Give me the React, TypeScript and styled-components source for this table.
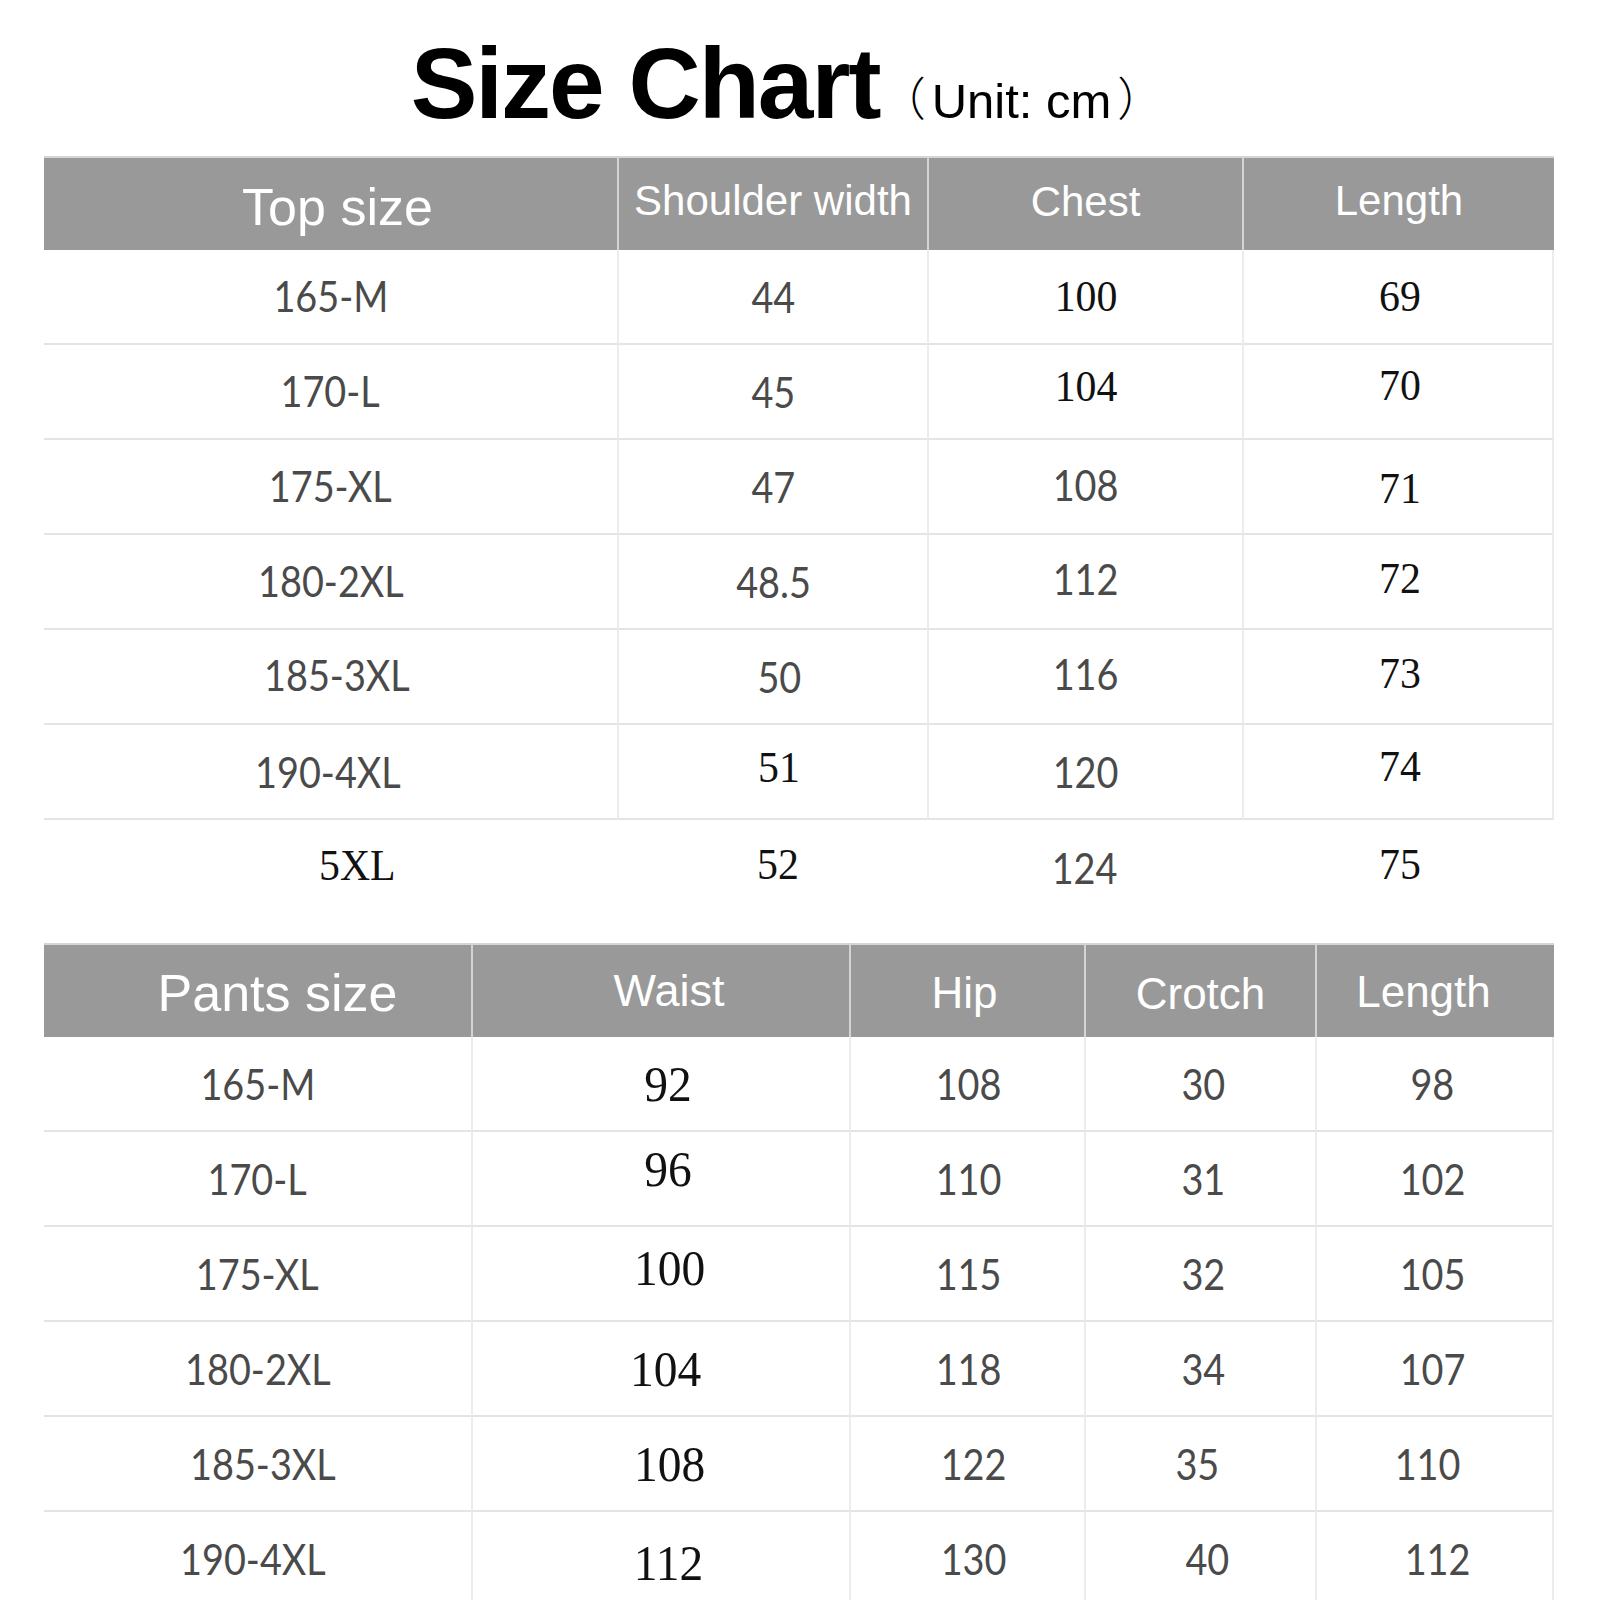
import React from 'react'
import styled, { createGlobalStyle } from 'styled-components'

const Global = createGlobalStyle`
  html, body {
    margin: 0;
    padding: 0;
    background: #fff;
    overflow: hidden;
  }
`

const Page = styled.div`
  width: 1600px;
  height: 1600px;
  box-sizing: border-box;
  padding: 0 46px 0 44px;
  display: flex;
  flex-direction: column;
  overflow: hidden;
`

const Title = styled.div`
  flex-shrink: 0;
  height: 156px;
  box-sizing: border-box;
  padding: 33px 26px 0 0;
  display: flex;
  justify-content: center;
  align-items: baseline;
  margin-left: -44px;
  margin-right: -46px;
`

const Big = styled.span`
  font-family: "Liberation Sans", Arial, sans-serif;
  font-weight: bold;
  font-size: 100px;
  line-height: 100px;
  letter-spacing: -2px;
  color: #000;
`

const Unit = styled.span`
  font-family: "Liberation Sans", "Noto Sans CJK SC", sans-serif;
  font-size: 49px;
  line-height: 50px;
  color: #000;
`

const Paren = styled.span<{ $open?: boolean }>`
  font-family: "Noto Sans CJK SC", sans-serif;
  font-weight: 300;
  font-size: 46px;
  vertical-align: 3px;
  margin-right: ${p => (p.$open ? 6 : 0)}px;
  margin-left: ${p => (p.$open ? 0 : 6)}px;
`

const Table = styled.div<{ $cols: string }>`
  flex-shrink: 0;
  display: grid;
  grid-template-columns: ${p => p.$cols};
`

const Head = styled.div<{ $first?: boolean; $size: number }>`
  height: 94px;
  background: #999999;
  border-top: 2px solid #d6d6d6;
  border-left: ${p => (p.$first ? 'none' : '2px solid #d4d4d4')};
  box-sizing: border-box;
  display: flex;
  align-items: center;
  justify-content: center;
  font-family: "Liberation Sans", Arial, sans-serif;
  font-size: ${p => p.$size}px;
  color: #fff;
  white-space: nowrap;
`

const HeadText = styled.span<{ $dx?: number; $dy?: number }>`
  margin-left: ${p => (p.$dx ?? 0) * 2}px;
  margin-top: ${p => (p.$dy ?? 0) * 2}px;
`

const Cell = styled.div<{ $first?: boolean; $last?: boolean; $plain?: boolean }>`
  height: 95px;
  box-sizing: border-box;
  border-bottom: ${p => (p.$plain ? 'none' : '2px solid #e4e4e4')};
  border-left: ${p => (p.$first || p.$plain ? 'none' : '2px solid #ececec')};
  border-right: ${p => (p.$last && !p.$plain ? '2px solid #ececec' : 'none')};
  display: flex;
  align-items: center;
  justify-content: center;
`

const Value = styled.span<{ $serif?: boolean; $big?: boolean; $dx?: number; $dy?: number }>`
  display: inline-block;
  font-family: ${p => (p.$serif ? '"Liberation Serif", "Times New Roman", serif' : 'Lato, "Noto Sans", sans-serif')};
  font-size: ${p => (p.$big ? 50 : p.$serif ? 44 : 42)}px;
  color: ${p => (p.$serif ? '#111' : '#4a4a4a')};
  transform: scaleX(${p => (p.$serif ? 0.95 : 0.9)});
  margin-left: ${p => (p.$dx ?? 0) * 2}px;
  margin-top: ${p => (p.$dy ?? 0) * 2}px;
`

const Spacer = styled.div`
  height: 28px;
  flex-shrink: 0;
`

type V = { t: string; s?: boolean; b?: boolean; dx?: number; dy?: number }
type H = { t: string; size: number; dx?: number; dy?: number }

const topHead: H[] = [
  { t: 'Top size', size: 52, dx: 7, dy: 3 },
  { t: 'Shoulder width', size: 42, dy: -3 },
  { t: 'Chest', size: 42, dy: -2 },
  { t: 'Length', size: 42, dy: -3 },
]

const topRows: V[][] = [
  [{ t: '165-M', dy: -1 }, { t: '44' }, { t: '100', s: true }, { t: '69', s: true, dx: 2 }],
  [{ t: '170-L', dy: -1 }, { t: '45' }, { t: '104', s: true, dy: -5 }, { t: '70', s: true, dx: 2, dy: -6 }],
  [{ t: '175-XL', dy: -1 }, { t: '47' }, { t: '108', dy: -2 }, { t: '71', s: true, dx: 2, dy: 2 }],
  [{ t: '180-2XL', dy: -1 }, { t: '48.5' }, { t: '112', dy: -3 }, { t: '72', s: true, dx: 2, dy: -3 }],
  [{ t: '185-3XL', dx: 6, dy: -2 }, { t: '50', dx: 6 }, { t: '116', dy: -3 }, { t: '73', s: true, dx: 2, dy: -3 }],
  [{ t: '190-4XL', dx: -3 }, { t: '51', s: true, dx: 6, dy: -4 }, { t: '120' }, { t: '74', s: true, dx: 2, dy: -5 }],
  [{ t: '5XL', s: true, dx: 27, dy: -2 }, { t: '52', s: true, dx: 6, dy: -3 }, { t: '124' }, { t: '75', s: true, dx: 2, dy: -3 }],
]

const pantsHead: H[] = [
  { t: 'Pants size', size: 52, dx: 20, dy: 2 },
  { t: 'Waist', size: 45, dx: 8 },
  { t: 'Hip', size: 44, dx: -3, dy: 2 },
  { t: 'Crotch', size: 44, dy: 3 },
  { t: 'Length', size: 44, dx: -12, dy: 1 },
]

const pantsRows: V[][] = [
  [{ t: '165-M' }, { t: '92', s: true, b: true, dx: 7 }, { t: '108', dx: 1 }, { t: '30', dx: 3 }, { t: '98', dx: -2 }],
  [{ t: '170-L' }, { t: '96', s: true, b: true, dx: 7, dy: -10 }, { t: '110', dx: 1 }, { t: '31', dx: 3 }, { t: '102', dx: -2 }],
  [{ t: '175-XL' }, { t: '100', s: true, b: true, dx: 8, dy: -6 }, { t: '115', dx: 1 }, { t: '32', dx: 3 }, { t: '105', dx: -2 }],
  [{ t: '180-2XL' }, { t: '104', s: true, b: true, dx: 4 }, { t: '118', dx: 1 }, { t: '34', dx: 3 }, { t: '107', dx: -2 }],
  [{ t: '185-3XL', dx: 5 }, { t: '108', s: true, b: true, dx: 8 }, { t: '122', dx: 6 }, { t: '35', dx: -3 }, { t: '110', dx: -7 }],
  [{ t: '190-4XL', dx: -5 }, { t: '112', s: true, b: true, dx: 8, dy: 4 }, { t: '130', dx: 6 }, { t: '40', dx: 7 }, { t: '112', dx: 3 }],
]

function SizeTable({ cols, head, rows, plainLast }: { cols: string; head: H[]; rows: V[][]; plainLast?: boolean }) {
  return (
    <Table $cols={cols}>
      {head.map((h, i) => (
        <Head key={h.t + i} $first={i === 0} $size={h.size}>
          <HeadText $dx={h.dx} $dy={h.dy}>{h.t}</HeadText>
        </Head>
      ))}
      {rows.map((r, ri) =>
        r.map((v, ci) => (
          <Cell
            key={ri + '-' + ci}
            $first={ci === 0}
            $last={ci === r.length - 1}
            $plain={plainLast && ri === rows.length - 1}
          >
            <Value $serif={v.s} $big={v.b} $dx={v.dx} $dy={v.dy}>{v.t}</Value>
          </Cell>
        ))
      )}
    </Table>
  )
}

export default function App() {
  return (
    <Page>
      <Global />
      <Title>
        <Big>Size Chart</Big>
        <Unit><Paren $open>（</Paren>Unit: cm<Paren>）</Paren></Unit>
      </Title>
      <SizeTable cols="573px 310px 315px 312px" head={topHead} rows={topRows} plainLast />
      <Spacer />
      <SizeTable cols="427px 378px 235px 231px 239px" head={pantsHead} rows={pantsRows} />
    </Page>
  )
}
